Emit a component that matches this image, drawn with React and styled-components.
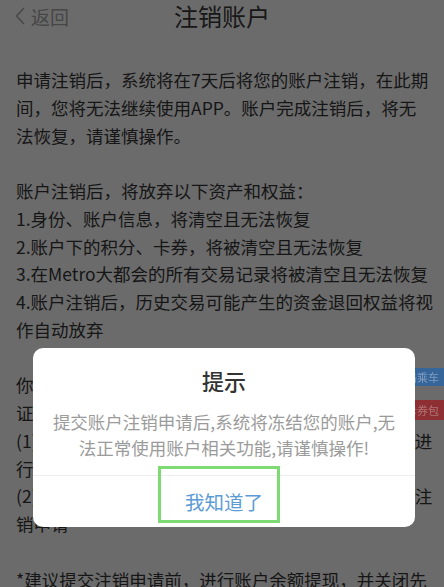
import React from "react";
import styled, { createGlobalStyle } from "styled-components";

const GlobalStyle = createGlobalStyle`
  html, body { margin: 0; padding: 0; background: #fff; }
  body {
    font-family: "Noto Sans CJK SC", "Noto Sans", "Liberation Sans", sans-serif;
    -webkit-font-smoothing: antialiased;
  }
  * { box-sizing: border-box; }
`;

const Page = styled.div`
  width: 444px;
  height: 587px;
  overflow: hidden;
  background: #fff;
`;

const Header = styled.header`
  display: grid;
  grid-template-columns: 1fr auto 1fr;
  align-items: center;
  height: 32px;
  padding: 0 15px;
`;

const BackLink = styled.a`
  display: flex;
  align-items: center;
  gap: 6px;
  color: #a9a9a9;
  font-size: 19px;
  line-height: 1;
  text-decoration: none;
`;

const Title = styled.h1`
  margin: 0;
  font-size: 24px;
  font-weight: 400;
  color: #3a3a3a;
  line-height: 32px;
`;

const Content = styled.main`
  padding: 34px 0 0 16px;
`;

const Paragraph = styled.p`
  margin: 0 0 27.75px;
  font-size: 17.5px;
  line-height: 27.75px;
  color: #363636;
  white-space: nowrap;
`;

const Backdrop = styled.div`
  position: fixed;
  inset: 0;
  background: rgba(0, 0, 0, 0.58);
  display: flex;
  justify-content: center;
  align-items: flex-start;
  padding: 348px 0 0 4px;
  z-index: 10;
`;

const Dialog = styled.div`
  width: 382px;
  background: #fff;
  border-radius: 10px;
  position: relative;
  z-index: 30;
`;

const DialogTitle = styled.h2`
  margin: 0;
  padding-top: 17px;
  font-size: 22px;
  font-weight: 500;
  line-height: 30px;
  text-align: center;
  color: #333;
`;

const DialogMessage = styled.p`
  margin: 13.5px 0 0;
  padding: 0 10px 13.5px;
  font-size: 17.5px;
  line-height: 26.5px;
  text-align: center;
  color: #9b9b9b;
  white-space: nowrap;
`;

const ActionRow = styled.div`
  position: relative;
  height: 52px;
  border-top: 1px solid #ededed;
  display: flex;
  align-items: center;
  justify-content: center;
`;

const ActionButton = styled.button`
  border: none;
  background: none;
  padding: 0;
  font-family: inherit;
  font-size: 19.5px;
  line-height: 1;
  color: #5b9bd6;
  cursor: pointer;
`;

const Highlight = styled.span`
  position: absolute;
  left: 125px;
  top: -10px;
  width: 122px;
  height: 57px;
  border: 3px solid #7edb74;
  pointer-events: none;
`;

const FloatingBadges = styled.div`
  position: fixed;
  top: 368px;
  right: 0;
  width: 29px;
  display: flex;
  flex-direction: column;
  gap: 14px;
  z-index: 20;
`;

const Badge = styled.div`
  height: ${(p) => p.$h}px;
  background: ${(p) => p.$bg};
  color: ${(p) => p.$fg};
  font-size: 11px;
  line-height: ${(p) => p.$h}px;
  display: flex;
  justify-content: flex-end;
  padding-right: 5px;
  overflow: hidden;
  white-space: nowrap;
`;

const Chevron = () => (
  <svg width="10" height="18" viewBox="0 0 10 18" fill="none">
    <polyline points="9,1 1.5,9 9,17" stroke="currentColor" strokeWidth="1.5" strokeLinejoin="miter" />
  </svg>
);

export default function App() {
  return (
    <>
      <GlobalStyle />
      <Page>
        <Header>
          <BackLink href="#">
            <Chevron />
            返回
          </BackLink>
          <Title>注销账户</Title>
          <span />
        </Header>
        <Content>
          <Paragraph>
            申请注销后，系统将在7天后将您的账户注销，在此期
            <br />
            间，您将无法继续使用APP。账户完成注销后，将无
            <br />
            法恢复，请谨慎操作。
          </Paragraph>
          <Paragraph>
            账户注销后，将放弃以下资产和权益：
            <br />
            1.身份、账户信息，将清空且无法恢复
            <br />
            2.账户下的积分、卡券，将被清空且无法恢复
            <br />
            3.在Metro大都会的所有交易记录将被清空且无法恢复
            <br />
            4.账户注销后，历史交易可能产生的资金退回权益将视
            <br />
            作自动放弃
          </Paragraph>
          <Paragraph>
            你需要满足以下条件，才能申请注销账户，以保
            <br />
            证账户安全和资产完整：
            <br />
            (1)账户余额为0，且无未完成的交易，请先提现后再进
            <br />
            行申请；
            <br />
            (2)已解除账户与第3方平台全部绑定关系后，可提交注
            <br />
            销申请
          </Paragraph>
          <Paragraph>*建议提交注销申请前，进行账户余额提现，并关闭先</Paragraph>
        </Content>
      </Page>
      <FloatingBadges>
        <Badge $h={18} $bg="#36659a" $fg="#7f9cc0">扫码乘车</Badge>
        <Badge $h={20} $bg="#8e2f33" $fg="#b0767a">卡券包</Badge>
      </FloatingBadges>
      <Backdrop>
        <Dialog role="dialog">
          <DialogTitle>提示</DialogTitle>
          <DialogMessage>
            提交账户注销申请后,系统将冻结您的账户,无
            <br />
            法正常使用账户相关功能,请谨慎操作!
          </DialogMessage>
          <ActionRow>
            <ActionButton>我知道了</ActionButton>
            <Highlight />
          </ActionRow>
        </Dialog>
      </Backdrop>
    </>
  );
}
